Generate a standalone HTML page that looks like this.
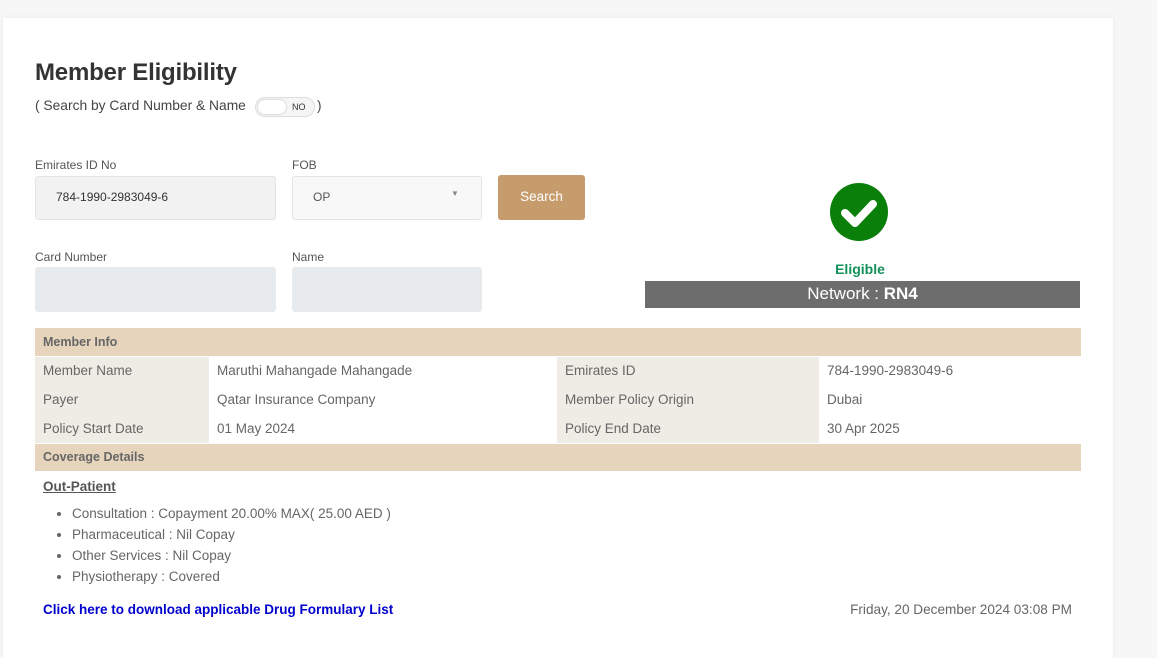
<!DOCTYPE html>
<html><head><style>
*{box-sizing:border-box;margin:0;padding:0}
body{width:1157px;height:634px;background:#f7f7f7;font-family:"Liberation Sans",sans-serif;color:#555;position:relative;overflow:hidden}
.card{position:absolute;left:3px;top:18px;width:1110px;height:640px;background:#fff;box-shadow:0 0 6px rgba(0,0,0,.05)}
.a{position:absolute;white-space:nowrap}
h1{position:absolute;left:35px;top:59px;font-size:24px;color:#333;font-weight:bold;letter-spacing:-0.2px}
.lbl{font-size:12px;color:#555}
.inp{position:absolute;border-radius:3px;border:1px solid #e4e4e4}
table{position:absolute;left:35px;top:328px;width:1046px;border-collapse:collapse;font-size:13.5px;color:#666}
td{height:29px;padding:0 8px}
.r1 td{border-top:1px solid #fff}
.hd td{background:#e6d5bc;font-weight:bold;font-size:12.5px;color:#666;height:28px}
.hd2 td{border-top:1px solid #fff}
.k{background:#efebe5}
ul{position:absolute;left:72px;top:503px;font-size:13.5px;color:#666;line-height:21px}
</style></head><body>
<div class="card"></div>
<h1>Member Eligibility</h1>
<div class="a" style="left:35px;top:98px;font-size:13.8px;color:#444">( Search by Card Number &amp; Name</div>
<div class="a" style="left:255px;top:97px;width:60px;height:20px;border-radius:10px;border:1px solid #ddd;background:#f5f5f5"></div>
<div class="a" style="left:257px;top:99px;width:30px;height:16px;border-radius:8px;background:#fff;border:1px solid #ddd"></div>
<div class="a" style="left:292px;top:102px;font-size:9px;color:#333">NO</div>
<div class="a" style="left:317px;top:98px;font-size:13.5px;color:#444">)</div>

<div class="a lbl" style="left:35px;top:158px">Emirates ID No</div>
<div class="inp" style="left:35px;top:176px;width:241px;height:44px;background:#f2f2f2"></div>
<div class="a" style="left:56px;top:190px;font-size:12px;color:#333">784-1990-2983049-6</div>
<div class="a lbl" style="left:292px;top:158px">FOB</div>
<div class="inp" style="left:292px;top:176px;width:190px;height:44px;background:#f8f8f8"></div>
<div class="a" style="left:313px;top:190px;font-size:12px;color:#555">OP</div>
<div class="a" style="left:451px;top:189px;font-size:8px;color:#888">▼</div>
<div class="a" style="left:498px;top:175px;width:87px;height:45px;background:#c69c6d;border-radius:3px;color:#fff;font-size:13.5px;text-align:center;line-height:43px">Search</div>

<div class="a lbl" style="left:35px;top:250px">Card Number</div>
<div class="inp" style="left:35px;top:267px;width:241px;height:45px;background:#e8ebee;border-color:#e8ebee"></div>
<div class="a lbl" style="left:292px;top:250px">Name</div>
<div class="inp" style="left:292px;top:267px;width:190px;height:45px;background:#e8ebee;border-color:#e8ebee"></div>

<svg class="a" style="left:829px;top:182px" width="60" height="60" viewBox="0 0 60 60"><circle cx="30" cy="30" r="29" fill="#0a7f0a"/><path d="M16 31 L26 41 L44 22" stroke="#fff" stroke-width="8" fill="none" stroke-linecap="round" stroke-linejoin="round"/></svg>
<div class="a" style="left:800px;top:261px;width:120px;text-align:center;font-size:14px;font-weight:bold;color:#13915a">Eligible</div>
<div class="a" style="left:645px;top:281px;width:435px;height:27px;background:#6d6d6d;color:#fff;font-size:17px;text-align:center;line-height:26px">Network : <b>RN4</b></div>

<table>
<tr class="hd"><td colspan="4">Member Info</td></tr>
<tr class="r1"><td class="k" style="width:174px">Member Name</td><td style="width:348px">Maruthi Mahangade Mahangade</td><td class="k" style="width:262px">Emirates ID</td><td>784-1990-2983049-6</td></tr>
<tr><td class="k">Payer</td><td>Qatar Insurance Company</td><td class="k">Member Policy Origin</td><td>Dubai</td></tr>
<tr><td class="k">Policy Start Date</td><td>01 May 2024</td><td class="k">Policy End Date</td><td>30 Apr 2025</td></tr>
<tr class="hd hd2"><td colspan="4">Coverage Details</td></tr>
</table>
<div class="a" style="left:43px;top:479px;font-size:13.5px;font-weight:bold;color:#555;text-decoration:underline">Out-Patient</div>
<ul>
<li>Consultation : Copayment 20.00% MAX( 25.00 AED )</li>
<li>Pharmaceutical : Nil Copay</li>
<li>Other Services : Nil Copay</li>
<li>Physiotherapy : Covered</li>
</ul>
<div class="a" style="left:43px;top:602px;font-size:13.5px;font-weight:bold;color:#0000cc">Click here to download applicable Drug Formulary List</div>
<div class="a" style="right:85px;top:602px;font-size:13.6px;color:#666">Friday, 20 December 2024 03:08 PM</div>
</body></html>
